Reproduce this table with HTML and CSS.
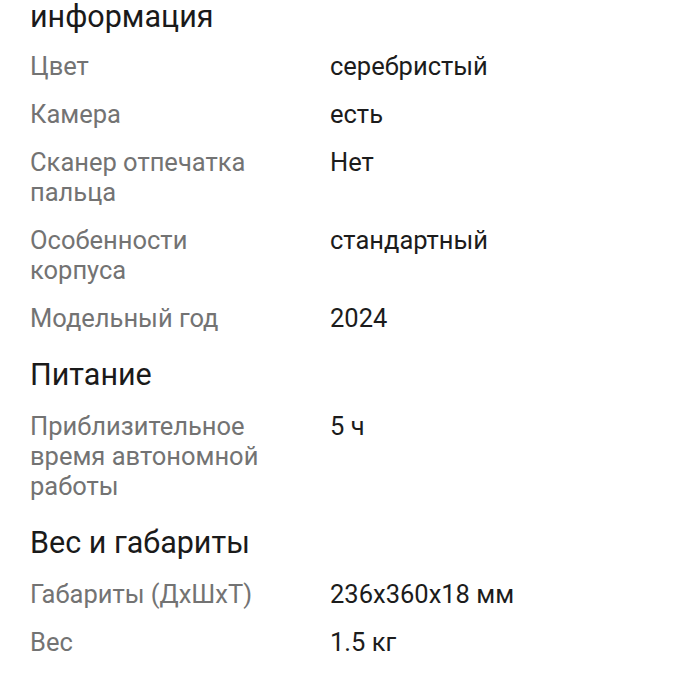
FILE: index.html
```html
<!DOCTYPE html>
<html lang="ru">
<head>
<meta charset="utf-8">
<link rel="stylesheet" href="styles.css">
</head>
<body>
<div class="page">
  <section class="group">
    <h2 class="group-title">информация</h2>
    <div class="spec"><div class="label">Цвет</div><div class="value">серебристый</div></div>
    <div class="spec"><div class="label">Камера</div><div class="value">есть</div></div>
    <div class="spec"><div class="label">Сканер отпечатка пальца</div><div class="value">Нет</div></div>
    <div class="spec"><div class="label">Особенности корпуса</div><div class="value">стандартный</div></div>
    <div class="spec"><div class="label">Модельный год</div><div class="value">2024</div></div>
  </section>
  <section class="group">
    <h2 class="group-title">Питание</h2>
    <div class="spec"><div class="label">Приблизительное время автономной работы</div><div class="value">5 ч</div></div>
  </section>
  <section class="group">
    <h2 class="group-title">Вес и габариты</h2>
    <div class="spec"><div class="label">Габариты (ДхШхТ)</div><div class="value">236x360x18 мм</div></div>
    <div class="spec"><div class="label">Вес</div><div class="value">1.5 кг</div></div>
  </section>
</div>
</body>
</html>
```
FILE: styles.css
```css
html, body {
  margin: 0;
  padding: 0;
  background: #ffffff;
}
body {
  font-family: Roboto, "Noto Sans", sans-serif;
  -webkit-font-smoothing: antialiased;
}
.page {
  padding: 0 30px;
  display: flex;
  flex-direction: column;
}
.group {
  display: flex;
  flex-direction: column;
  gap: 18px;
  margin-top: 25px;
}
.group:first-child {
  margin-top: 0;
}
.group-title {
  margin: 0 0 1px 0;
  font-size: 30.5px;
  font-weight: 400;
  line-height: 34px;
  color: #1a1a1a;
}
.group:first-child .group-title {
  margin-bottom: -1px;
}
.spec {
  display: grid;
  grid-template-columns: 300px 1fr;
  font-size: 25.5px;
  line-height: 30px;
}
.label {
  color: #737373;
  padding-right: 55px;
}
.value {
  color: #1c1c1c;
}
```
